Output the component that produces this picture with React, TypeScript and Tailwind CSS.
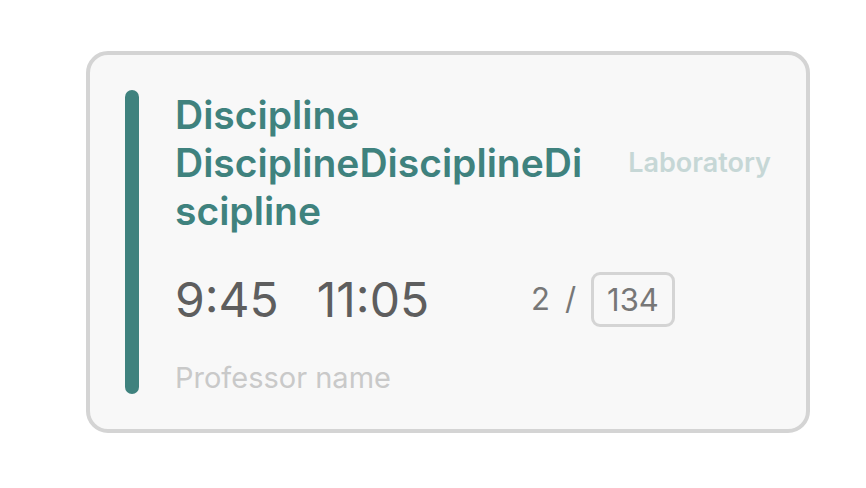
import React from 'react';

const LessonCard: React.FC = () => {
  return (
    <div className="flex w-[724px] rounded-[22px] border-4 border-[#d4d4d4] bg-[#f8f8f8] p-[35px]">
      <div className="w-[14px] shrink-0 rounded-full bg-[#3f827e]" />
      <div className="ml-[36px] flex min-w-0 flex-1 flex-col">
        <div className="mt-[1px] flex items-center gap-[36px]">
          <h2 className="min-w-0 flex-1 break-words text-[39px] font-semibold leading-[48px] text-[#3f827e]">
            Discipline DisciplineDisciplineDiscipline
          </h2>
          <span className="shrink-0 text-[27px] font-semibold text-[#c6d7d6]">Laboratory</span>
        </div>
        <div className="mt-[37px] flex items-center">
          <div className="flex w-[356px] gap-[38px] text-[48px] leading-[55px] text-[#5e5e5e]">
            <span>9:45</span>
            <span>11:05</span>
          </div>
          <div className="flex items-center text-[31px] text-[#777777]">
            <span>2</span>
            <span className="ml-[15px]">/</span>
            <span className="ml-[15px] rounded-[9px] border-[3px] border-[#d4d4d4] px-[13px] leading-[49px]">134</span>
          </div>
        </div>
        <p className="mt-[35px] text-[29px] leading-[32px] text-[#c9c9c9]">Professor name</p>
      </div>
    </div>
  );
};

export default function App() {
  return (
    <div className="min-h-[488px] w-[866px] bg-white pl-[86px] pt-[51px] font-['Inter',sans-serif]">
      <LessonCard />
    </div>
  );
}
